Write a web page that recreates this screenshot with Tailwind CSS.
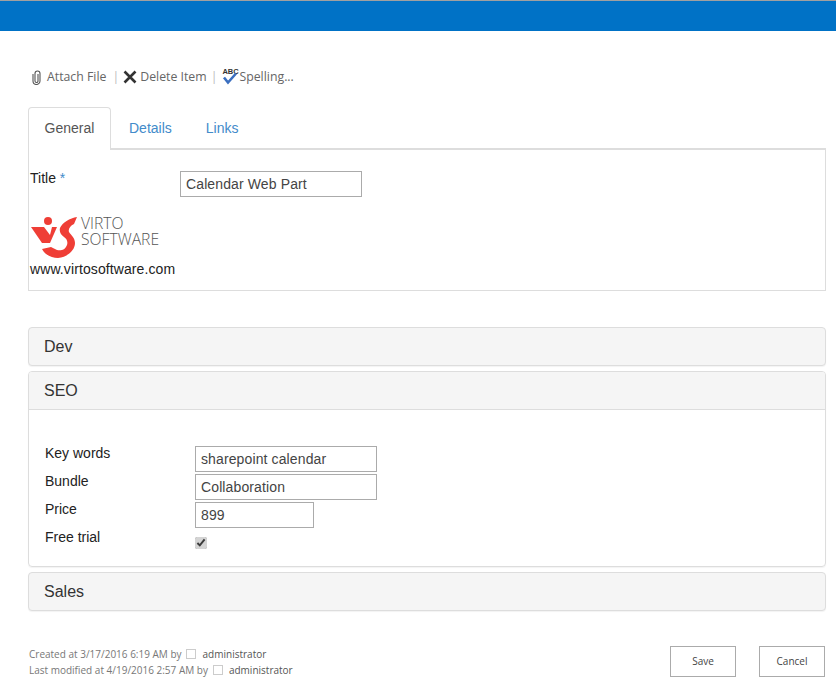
<!DOCTYPE html>
<html lang="en">
<head>
    <meta charset="UTF-8">
    <title>Calendar Web Part</title>
    <script src="https://cdn.jsdelivr.net/npm/@tailwindcss/browser@4"></script>
</head>
<body class="bg-white h-[677px] overflow-hidden font-['Liberation_Sans',sans-serif] text-[14px] text-[#333]">
    <!-- Top bar -->
    <div class="h-[31px] bg-[#0072c6] border-t border-[#a0a0a0]"></div>

    <!-- Toolbar -->
    <div class="pt-[37px] pl-[31px] h-[55px] flex items-center font-['Open_Sans',sans-serif] text-[12.300px] text-[#666]">
        <svg class="w-[11px] h-[15px]" viewBox="0 0 11 15" fill="none" stroke="#555" stroke-width="1.100"><path d="M7 4v7a1.500 1.500 0 0 1-3 0V3.500a2.500 2.500 0 0 1 5 0v7.500a3.500 3.500 0 0 1-7 0V4"/></svg>
        <span class="ml-[5px]">Attach File</span>
        <span class="ml-[6px] text-[#bbb]">|</span>
        <svg class="ml-[4px] w-[14px] h-[14px]" viewBox="0 0 14 14" stroke="#333" stroke-width="2.600"><path d="M1.500 1.500l11 11M12.500 1.500l-11 11"/></svg>
        <span class="ml-[3px]">Delete Item</span>
        <span class="ml-[4px] text-[#bbb]">|</span>
        <span class="relative ml-[5px] w-[16px] h-[16px]">
            <span class="absolute left-0 -top-[1px] text-[7.500px] leading-[8px] font-bold text-[#333] font-['Liberation_Sans',sans-serif]">ABC</span>
            <svg class="absolute left-0 top-0 w-[16px] h-[16px]" viewBox="0 0 16 16" fill="none" stroke="#3b6fc0" stroke-width="2.600"><path d="M2 8.500l4 5 8-9"/></svg>
        </span>
        <span class="ml-[1px]">Spelling...</span>
    </div>

    <!-- Tabs -->
    <div class="mt-[21px] mx-[28px] w-[798px]">
        <div class="flex h-[43px] border-b-2 border-[#ddd]">
            <div class="w-[83px] h-[43px] pb-[2px] bg-white border border-b-0 border-[#ddd] rounded-t-[4px] flex items-center justify-center text-[#555]">General</div>
            <div class="ml-[18px] leading-[43px] text-[#428bca]">Details</div>
            <div class="ml-[34px] leading-[43px] text-[#428bca]">Links</div>
        </div>
        <div class="h-[141px] border border-t-0 border-[#ddd] pl-[1px] relative">
            <div class="flex">
                <div class="w-[150px] pt-[20px] text-[#222] leading-[16px]">Title <span class="text-[#428bca]">*</span></div>
                <input class="mt-[21px] w-[182px] h-[26px] border border-[#ababab] px-[5px] text-[14px] tracking-[0.12px] text-[#444]" value="Calendar Web Part">
            </div>
            <!-- Logo -->
            <div class="mt-[18px] flex h-[43px]">
                <svg class="w-[50px] h-[44px] shrink-0" viewBox="0 0 50 44" fill="#ef3e36">
                    <circle cx="18" cy="6" r="4"/>
                    <path d="M1 12h13l6 8 2-8h5l-7 16h-8z"/>
                    <path d="M47 2C40 3 32 8 30 13C29 17 31 20 34 22C37 24 38 27 37 30C35 35 31 36 27 35L21 32L12 34C15 40 22 43 28 43C38 42 45 35 45 28C45 23 41 20 39 17C38 14 40 11 44 9Z"/>
                </svg>
                <div class="ml-[1px] font-['Open_Sans',sans-serif] font-light text-[15.700px] leading-[16px] text-[#555]">VIRTO<br>SOFTWARE</div>
            </div>
            <div class="mt-[3px] text-[#222] leading-[16px] tracking-[0.1px]">www.virtosoftware.com</div>
        </div>

        <!-- Accordion -->
        <div class="mt-[36px] h-[39px] bg-[#f5f5f5] border border-[#ddd] rounded-[4px] shadow-[0_1px_1px_rgba(0,0,0,0.05)] px-[15px] leading-[37px] text-[16px] text-[#333]">Dev</div>

        <div class="mt-[5px] h-[196px] border border-[#ddd] rounded-[4px] shadow-[0_1px_1px_rgba(0,0,0,0.05)]">
            <div class="h-[38px] bg-[#f5f5f5] border-b border-[#ddd] rounded-t-[3px] px-[15px] leading-[37px] text-[16px]">SEO</div>
            <div class="pt-[36px] pl-[16px] grid grid-cols-[150px_1fr] auto-rows-[28px] text-[#222]">
                <div class="-mt-[1px] leading-[16px]">Key words</div>
                <input class="w-[182px] h-[26px] border border-[#ababab] px-[5px] tracking-[0.12px] text-[#444]" value="sharepoint calendar">
                <div class="-mt-[1px] leading-[16px]">Bundle</div>
                <input class="w-[182px] h-[26px] border border-[#ababab] px-[5px] tracking-[0.12px] text-[#444]" value="Collaboration">
                <div class="-mt-[1px] leading-[16px]">Price</div>
                <input class="w-[119px] h-[26px] border border-[#ababab] px-[5px] tracking-[0.12px] text-[#444]" value="899">
                <div class="-mt-[1px] leading-[16px]">Free trial</div>
                <div><input type="checkbox" checked class="mt-[7px] w-[12px] h-[12px] block accent-[#d4d4d4]"></div>
            </div>
        </div>

        <div class="mt-[5px] h-[39px] bg-[#f5f5f5] border border-[#ddd] rounded-[4px] shadow-[0_1px_1px_rgba(0,0,0,0.05)] px-[15px] leading-[37px] text-[16px]">Sales</div>
    </div>

    <!-- Footer -->
    <div class="mt-[35px] ml-[29px] w-[796px] flex justify-between font-['Open_Sans',sans-serif] text-[10px] text-[#777]">
        <div class="leading-[16px]">
            <div class="flex items-center">Created at 3/17/2016 6:19 AM by<span class="ml-[4px] w-[10px] h-[10px] border border-[#ccc]"></span><span class="ml-[7px] text-[#555]">administrator</span></div>
            <div class="flex items-center">Last modified at 4/19/2016 2:57 AM by<span class="ml-[5px] w-[10px] h-[10px] border border-[#ccc]"></span><span class="ml-[6px] text-[#555]">administrator</span></div>
        </div>
        <div class="flex gap-[23px]">
            <button class="w-[66px] h-[31px] border border-[#ababab] bg-white text-[#444]">Save</button>
            <button class="w-[66px] h-[31px] border border-[#ababab] bg-white text-[#444]">Cancel</button>
        </div>
    </div>
</body>
</html>
